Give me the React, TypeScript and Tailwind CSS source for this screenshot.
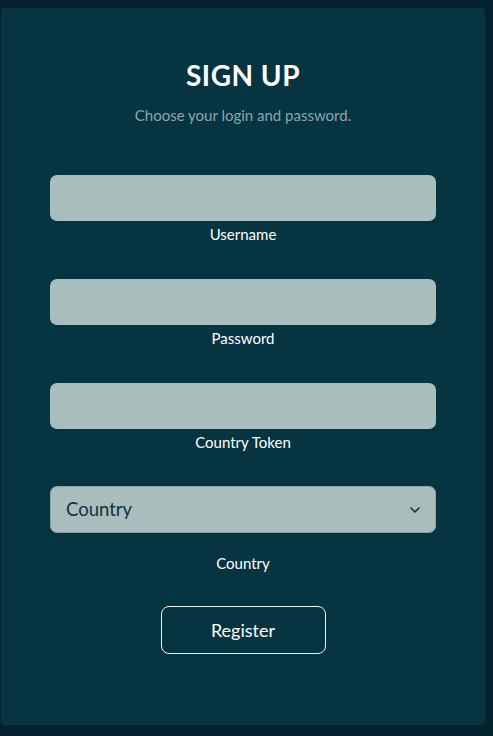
export default function App() {
  const fields = ["Username", "Password", "Country Token"];
  return (
    <div className="min-h-[736px] w-full bg-[#03222e] pt-2 pl-px pr-2 pb-[11px]" style={{ fontFamily: "Lato, 'Noto Sans', sans-serif" }}>
      <div className="h-[717px] w-[484px] rounded bg-[#073441] px-[49px] pt-[46px]">
        <h1 className="text-center text-[28px] font-bold leading-[42px] tracking-[0.5px] text-white">SIGN UP</h1>
        <p className="mt-[9px] text-center text-[15px] leading-[20px] text-[#8ea5ab]">Choose your login and password.</p>
        <div className="mt-[50px] flex flex-col">
          {fields.map((f, i) => (
            <div key={f} className={i === 2 ? "mb-[35px] flex flex-col items-center" : "mb-[36px] flex flex-col items-center"}>
              <input className="h-[46px] w-full rounded-[7px] bg-[#a9bdbc] outline-none" />
              <span className="mt-[4px] text-[15px] leading-[18px] text-white">{f}</span>
            </div>
          ))}
          <div className="flex flex-col items-center">
            <div className="flex h-[47px] w-full items-center justify-between rounded-[7px] border border-[#8ca3a6] bg-[#a9bdbc] pl-[15px] pr-[14px]">
              <span className="text-[18.5px] text-[#0b3442]">Country</span>
              <svg width="12" height="8" viewBox="0 0 12 8" fill="none" stroke="#0b3442" strokeWidth="1.6" strokeLinecap="round" strokeLinejoin="round">
                <path d="M2 2l4 4 4-4" />
              </svg>
            </div>
            <span className="mt-[21px] text-[15px] leading-[18px] text-white">Country</span>
            <button className="mt-[34px] h-[48px] w-[165px] rounded-[8px] border border-[#f2f2ea] text-[18px] text-white">Register</button>
          </div>
        </div>
      </div>
    </div>
  );
}
